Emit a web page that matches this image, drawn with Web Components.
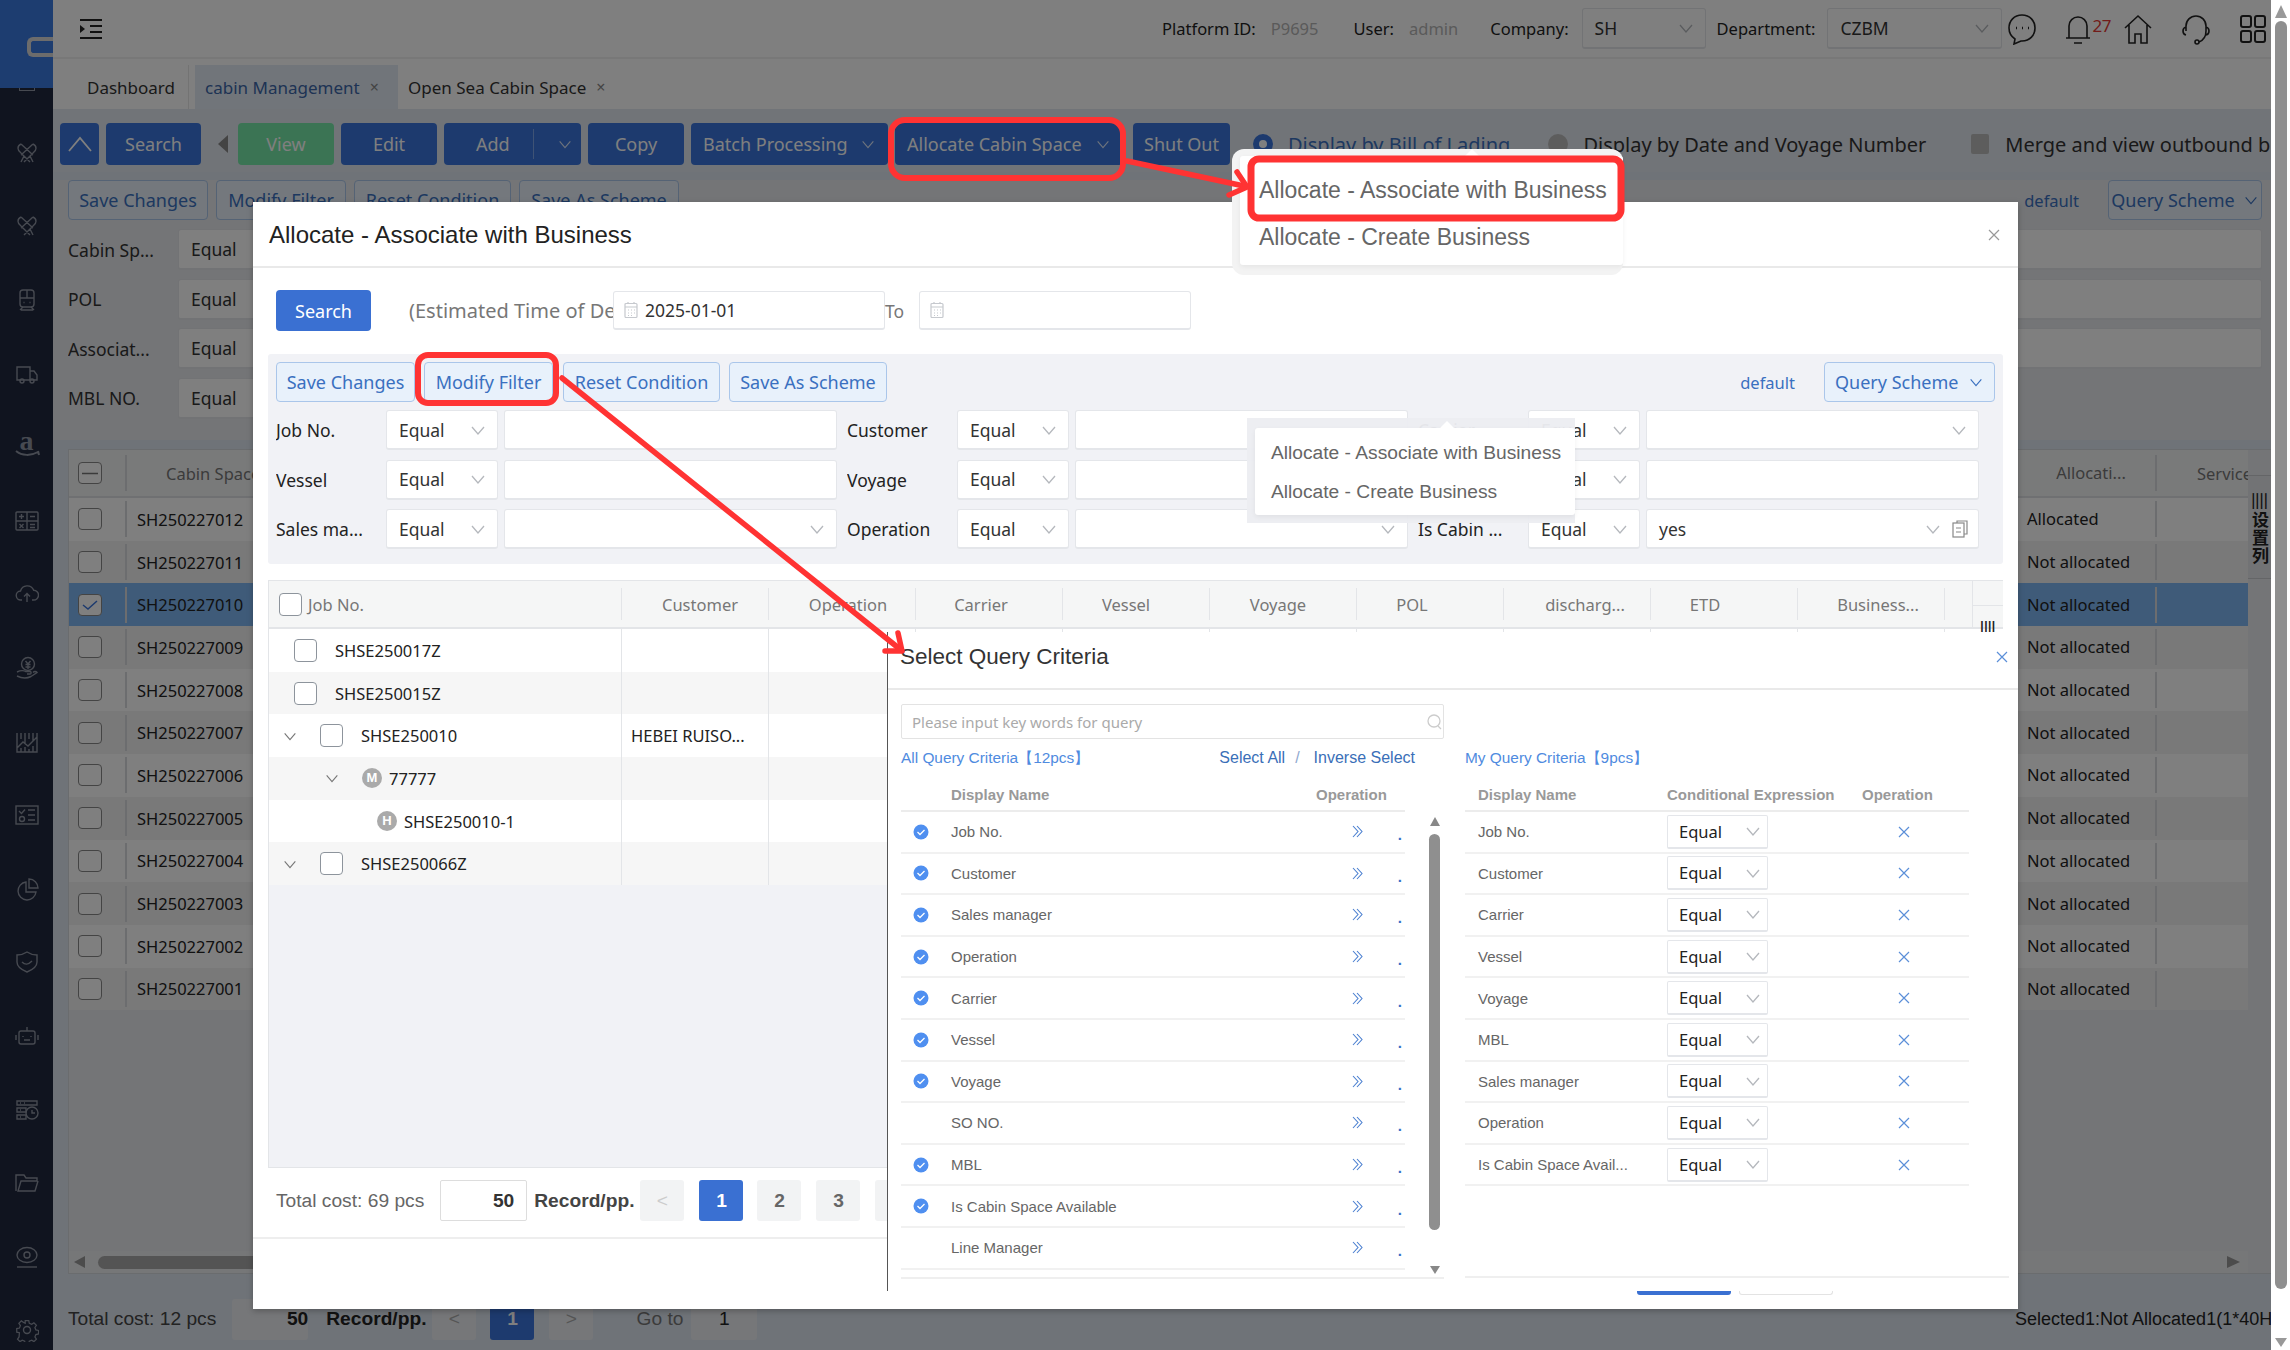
<!DOCTYPE html>
<html lang="en">
<head>
<meta charset="utf-8">
<title>Allocate</title>
<style>
html,body{margin:0;padding:0;width:2290px;height:1350px;overflow:hidden;background:#fff;font:17.5px "Noto Sans","Noto Sans CJK SC",sans-serif;color:#333}
</style>
<script>
const chev=(c='#b5b8bd',s=18)=>`<svg width="${s}" height="${s}" viewBox="0 0 18 18" fill="none" stroke="${c}" stroke-width="1.3" style="flex:none;display:block"><path d="M3 6l6 7 6-7"/></svg>`;
const cal=(c='#c6c9ce')=>`<svg width="14" height="18" viewBox="0 0 14 18" fill="none" stroke="${c}" stroke-width="1.2" style="flex:none;display:block"><rect x="1" y="2.5" width="12" height="14" rx="1"/><path d="M1 6h12M4 1v2M10 1v2M4 9h1M7 9h1M10 9h1M4 12h1M7 12h1M10 12h1M4 14.500h1M7 14.500h1"/></svg>`;
function def(name,css,render){customElements.define(name,class extends HTMLElement{connectedCallback(){if(this.shadowRoot)return;const r=this.attachShadow({mode:'open'});r.innerHTML=`<style>${css}</style>`+render(this)}})}
const A=(e,n,d='')=>e.getAttribute(n)??d;

def('x-btn',`:host{display:inline-flex;box-sizing:border-box;height:var(--h,41px);align-items:center;justify-content:center;border-radius:4px;flex:none;white-space:nowrap;font-size:18px;gap:8px;background:#3a75dc;color:#fff;padding:0 12px}
:host([kind=green]){background:#76e8a8}
:host([kind=light]){background:#e8f1fb;color:#3a70c0;border:1.5px solid #aac6ea;height:40px}
:host([split]){justify-content:space-between}
:host([blue]){background:#3a70d2}
.d{width:1px;height:30px;background:#7fa6ea;margin:0 2px}`,e=>`<slot></slot>${e.hasAttribute('add')?'<span class="d"></span>':''}${e.hasAttribute('chev')?chev(A(e,'kind')=='light'?'#3a70c0':'#dbe6fa',16):''}`);

def('x-sel',`:host{display:flex;box-sizing:border-box;height:var(--h,40px);align-items:center;justify-content:space-between;background:#fff;border:1px solid #e4e6ea;border-bottom:2px solid #e4e6ea;border-radius:3px;padding:0 10px 0 12px;color:#333;min-width:0;white-space:nowrap}
.r{display:flex;align-items:center;gap:10px}`,e=>`<span><slot></slot></span><span class="r">${e.hasAttribute('nochev')?'':chev()}${e.hasAttribute('doc')?`<svg width="16" height="18" viewBox="0 0 16 18" fill="none" stroke="#888" stroke-width="1.2"><rect x="1" y="3" width="11" height="14"/><path d="M5 3V1h10v13h-3M4 8h5M4 12h5"/></svg>`:''}</span>`);

def('x-inp',`:host{display:flex;box-sizing:border-box;height:40px;align-items:center;gap:8px;background:#fff;border:1px solid #e4e6ea;border-bottom:2px solid #e4e6ea;border-radius:3px;padding:0 10px;color:#333;white-space:nowrap;min-width:0}`,e=>`${e.hasAttribute('cal')?cal():''}<slot></slot>`);

def('x-fgroup',`:host{display:grid;grid-template-columns:110px 112px 339px;column-gap:0;align-items:center;white-space:nowrap}
x-inp,x-sel.v{margin-left:6px}
.l{overflow:hidden}`,e=>{const k=A(e,'kind','i'),v=A(e,'value');return `<span class="l">${A(e,'label')}</span><x-sel>Equal</x-sel>${k=='i'?'<x-inp></x-inp>':`<x-sel class="v" ${k=='doc'?'doc':''}>${v}</x-sel>`}`});

const sideIcons=[
'<path d="M6 3C2 5 2 9 6 12l9 9M18 3c4 2 4 6 0 9l-9 9M6 3l12 11M18 3L6 14M15 15l3 6M9 15l-3 6"/>',
'<path d="M6 3C2 5 2 9 6 12l9 9M18 3c4 2 4 6 0 9l-9 9M6 3l12 11M18 3L6 14M15 15l3 6"/>',
'<rect x="5" y="2" width="14" height="17" rx="3"/><path d="M5 10h14M12 2v8M8.500 14.500h1M14.500 14.500h1M8 19l-3 3M16 19l3 3M6 22h12"/>',
'<path d="M2 5h13v13H2zM15 9h4l3 4v5h-7"/><circle cx="7" cy="19" r="2"/><circle cx="17" cy="19" r="2"/>',
'', 
'<rect x="1" y="3" width="22" height="18" rx="1"/><path d="M12 3v18M1 12h22M4 7.500h5M6.500 5v5M15 7.500h5M4.500 15l4 4M8.500 15l-4 4M15 15.500h5M15 18.500h5"/>',
'<path d="M7 18H6a4.500 4.500 0 0 1-.5-9 7 7 0 0 1 13.200-.8A4.800 4.800 0 0 1 18.500 18H17M12 20v-8M9 14.500l3-3 3 3"/>',
'<circle cx="13" cy="8" r="6.500"/><path d="M10.500 5l2.500 3 2.500-3M10.500 8.500h5M10.500 11h5M13 8v5M2 16c4-2 6-2 9-.5h4c1.500 0 1.500 2.500 0 2.500h-3M2 20c6 3 11 2 14 .5l6-4c-1-1.500-3-1-4 0"/>',
'<path d="M2 3v19h20V3M6 3v6M10 3v10M14 3v6M18 3v8M2 18l6-6 5 4 9-9M6 22v-4M10 22v-5M14 22v-3M18 22v-6"/>',
'<rect x="1" y="3" width="22" height="18"/><path d="M4 8l2.500 2.500L10 6.500M13 7h7M13 12h7M13 17h7"/><circle cx="7" cy="16" r="2.500"/>',
'<path d="M11 5a9 9 0 1 0 10 10H11z"/><path d="M14 2a9 9 0 0 1 9 9h-9z"/>',
'<path d="M12 2c3 2 7 3 10 3v7c0 5-5 8-10 10C7 20 2 17 2 12V5c3 0 7-1 10-3z"/><path d="M7 12c3 3 6 3 10-1"/>',
'<rect x="4" y="7" width="16" height="13" rx="2"/><path d="M12 7V3M1 11v5M23 11v5M8 12v1M16 12v1M9 16h6"/>',
'<path d="M2 3h20v4H2zM2 10h9v4H2zM2 17h9v4H2zM5 5h1M5 12h1M5 19h1M9 5h1"/><circle cx="17" cy="15" r="6"/><path d="M17 12v3h3"/>',
'<path d="M1 20V4h8l2 3h11v3H6l-3 10h17l3-10"/>',
'<ellipse cx="12" cy="10" rx="10" ry="7.500"/><circle cx="12" cy="10" r="3"/><path d="M2 22h20"/>',
'<circle cx="12" cy="12" r="3.500"/><path d="M10 1.500h4l.6 3 2.700 1.100 2.500-1.700 2.800 2.800-1.700 2.500 1.100 2.700 3 .6v4l-3 .6-1.100 2.700 1.700 2.500-2.800 2.800-2.500-1.700-2.700 1.100-.6 3h-4l-.6-3-2.700-1.100-2.500 1.700-2.800-2.800 1.700-2.500L3.500 15l-3-.6v-4l3-.6 1.100-2.700-1.700-2.500 2.800-2.800 2.500 1.700L10 4.500z" transform="translate(1.300 1.300) scale(.89)"/>'
];
def('x-side',`:host{display:flex;flex-direction:column;width:53px;flex:none;background:#20283e;overflow:hidden;position:relative}
.logo{height:88px;background:#3a7be0;flex:none;display:flex;align-items:flex-end;justify-content:flex-end;padding-bottom:0;box-sizing:border-box}
.c{width:26px;height:20px;border:4px solid #d8d8d8;border-right:none;border-radius:6px 0 0 6px;box-sizing:border-box;margin-bottom:31px}
.stub{height:28px;flex:none;display:flex;justify-content:center}
.stub i{display:block;width:16px;height:3px;border:1.500px solid #8e94a2;border-top:none;box-sizing:border-box}
.it{height:73.600px;flex:none;display:flex;align-items:center;justify-content:center;color:#8e94a2}
svg{display:block;width:24px;height:24px;fill:none;stroke:currentColor;stroke-width:1.4}
.a{font:700 28px/1 "Liberation Serif",serif;position:relative;height:32px;width:26px;text-align:center;top:-4px}
.a svg{position:absolute;left:0;top:23px;width:26px;height:8px;stroke-width:2}`,()=>`<div class="logo"><div class="c"></div></div><div class="stub"><i></i></div>`+sideIcons.map((p,i)=>i==4?`<div class="it"><div class="a">a<svg viewBox="0 0 26 8"><path d="M2 1c6 5 15 5 22 1M24 1l1 4"/></svg></div></div>`:`<div class="it"><svg viewBox="0 0 24 24">${p}</svg></div>`).join(''));

def('x-top',`:host{display:flex;align-items:center;height:59px;flex:none;box-sizing:border-box;background:#fff;border-bottom:2px solid #f0f0f0;padding-left:27px;font-size:16.500px;color:#222;white-space:nowrap}
.g{color:#b4b4b4}
x-sel{--h:41px;color:#333;font-size:17.500px}
svg{display:block;fill:none;stroke:#222;stroke-width:1.6;flex:none}
.n{color:#e53935;font-size:17px;width:20px;margin-left:0;letter-spacing:-.5px;position:relative;top:-3px}`,()=>`<svg width="22" height="22" viewBox="0 0 22 22" style="stroke-width:2.2"><path d="M0 2h22M10 8h12M10 14h12M0 20h22"/><path d="M0 7l5 4-5 4z" fill="#222" stroke="none"/></svg>
<span style="margin-left:1060px">Platform ID:</span><span class="g" style="margin-left:15px">P9695</span><span style="margin-left:35px">User:</span><span class="g" style="margin-left:15px">admin</span><span style="margin-left:32px">Company:</span>
<x-sel style="width:124px;margin-left:13px">SH</x-sel><span style="margin-left:11px">Department:</span><x-sel style="width:175px;margin-left:12px">CZBM</x-sel>
<svg width="30" height="32" viewBox="0 0 30 32" style="margin-left:5px"><path d="M15 2C7 2 2 8 2 15c0 5 3 9 6 11l-1 5 7-3h1c8 0 13-6 13-13S23 2 15 2z"/><path d="M9 15h1M15 15h1M21 15h1" stroke-width="2.400"/></svg>
<svg width="28" height="32" viewBox="0 0 28 32" style="margin-left:27px"><path d="M5 25V13a9 9 0 0 1 18 0v12M2 25h24M10 30h8"/></svg><span class="n">27</span>
<svg width="30" height="32" viewBox="0 0 30 32" style="margin-left:11px"><path d="M2 15L15 3l13 12M6 12v18h6v-9h6v9h6V12"/></svg>
<svg width="30" height="32" viewBox="0 0 30 32" style="margin-left:28px"><path d="M5 18v-5a10 10 0 0 1 20 0v5c0 5-2 9-7 11M5 14c-4 1-4 7 0 8M25 14c4 1 4 7 0 8"/><circle cx="16" cy="29" r="2" /></svg>
<svg width="28" height="30" viewBox="0 0 28 30" style="margin-left:28px;stroke-width:2"><rect x="2" y="2" width="10" height="11" rx="2"/><rect x="16" y="2" width="10" height="11" rx="2"/><rect x="2" y="17" width="10" height="11" rx="2"/><rect x="16" y="17" width="10" height="11" rx="2"/></svg>`);

def('x-tabs',`:host{display:flex;align-items:flex-end;height:50px;flex:none;background:#fff;color:#333;font-size:17px;white-space:nowrap}
.t{height:44px;display:flex;align-items:center;box-sizing:border-box}
.d{padding:0 13px 0 34px;border-right:1.500px solid #e6e6e6}
.a{margin-left:6px;width:203px;background:#e3ebf5;color:#3c66a8;padding-left:10px;justify-content:space-between;padding-right:19px}
.o{padding-left:10px}
.x{font-size:16px;color:#888}
.o .x{margin-left:10px}`,()=>`<div class="t d">Dashboard</div><div class="t a"><span>cabin Management</span><span class="x">×</span></div><div class="t o"><span>Open Sea Cabin Space</span><span class="x">×</span></div>`);

def('x-bgfilter',`:host{display:grid;grid-template-columns:110px 112px 6px 1fr 6px 356px;row-gap:8.500px;align-items:center;white-space:nowrap}
x-sel,x-inp{--h:41px;height:41px}
.l{overflow:hidden}`,()=>{const r=(l,c='',last=true)=>`<span class="l">${l}</span><x-sel>Equal</x-sel><i></i><x-inp></x-inp><i></i>${last?`<x-inp ${c}></x-inp>`:'<i></i>'}`;return r('Cabin Sp...')+r('POL')+r('Associat...','cal')+r('MBL NO.','',false)});

def('x-bgtable',`:host{display:flex;flex-direction:column;flex:1;min-height:0;background:#e9ebef;border:1.500px solid #d5d8dd;border-right:none;box-sizing:border-box;font-size:16.500px;color:#222;overflow:hidden;position:relative}
.row{display:grid;grid-template-columns:58px 180px 1720px 130px 91px 23px;height:42.700px;align-items:center;flex:none;background:#fff;white-space:nowrap}
.row.alt{background:#f3f3f3}
.row.sel{background:#7eb6f2}
.hd{height:46px;background:#f3f4f4;color:#777;border-bottom:2px solid #dfe1e4;font-size:16.500px}
.cb{width:24px;height:22px;box-sizing:border-box;border:1.500px solid #888;border-radius:4px;background:#fff;margin-left:9px;display:flex;align-items:center;justify-content:center}
.c0{border-right:2px solid #d8dade;height:36px;display:flex;align-items:center}
.c1{padding-left:10px}
.hd .c1{padding-left:39px}
.al{border-right:2px solid #d8dade;height:36px;line-height:36px}
.hd .al{text-align:center}
.sv{overflow:hidden;padding-left:40px}
.row>:last-child{background:#e9ebef;align-self:stretch}
.fill{flex:1;background:#e9ebef}
.set{position:absolute;right:0;top:25px;width:23px;font:600 16px/1 "Noto Sans CJK SC",sans-serif;color:#222;background:#e4e6ea;border-top:1.500px solid #c8cace;border-bottom:1.500px solid #c8cace;padding:16px 0 0;text-align:center;height:104px;box-sizing:border-box;overflow:hidden}
.sb{height:22px;flex:none;background:#eceef0;display:flex;align-items:center;padding:0 8px 0 5px;margin-right:23px}
.tri{width:0;height:0;border-top:6px solid transparent;border-bottom:6px solid transparent}
.th{height:13px;border-radius:7px;background:#a9a9a9;width:1500px;margin-left:13px}`,()=>{
const ids=[12,11,10,9,8,7,6,5,4,3,2,1];
return `<div class="row hd"><div class="c0"><span class="cb"><svg width="16" height="3"><path d="M0 1.500h16" stroke="#777" stroke-width="1.500"/></svg></span></div><div class="c1">Cabin Space</div><div></div><div class="al">Allocati...</div><div class="sv">Service</div><div></div></div>`+
ids.map((n,i)=>`<div class="row ${i==2?'sel':i%2?'alt':''}"><div class="c0"><span class="cb">${i==2?'<svg width="16" height="10" fill="none" stroke="#3a75dc" stroke-width="1.500"><path d="M1 5l5 4 9-8"/></svg>':''}</span></div><div class="c1">SH2502270${String(n).padStart(2,'0')}</div><div></div><div class="al">${i?'Not allocated':'Allocated'}</div><div class="sv"></div><div></div></div>`).join('')+
`<div class="fill"></div><div class="sb"><span class="tri" style="border-right:11px solid #999"></span><span class="th"></span><span class="tri" style="border-left:13px solid #999;margin-left:auto"></span></div>
<div class="set"><div style="font-size:14px;line-height:14px">||||</div><div style="font-size:17px;line-height:18px;width:17px;margin:4px auto 0 4px">设置列</div></div>`});

def('x-bgpager',`:host{display:flex;align-items:center;height:76px;padding:14px 0 0 15px;box-sizing:border-box;flex:none;font:19.200px "Liberation Sans",sans-serif;color:#444;white-space:nowrap;overflow:hidden}
.b{display:inline-flex;align-items:center;justify-content:center;height:41px;background:#eceff3;border-radius:3px;width:44px;color:#aaa;flex:none}
.p{background:#3a75dc;color:#fff;font-weight:700}`,()=>`<span>Total cost: 12 pcs</span><span class="b" style="width:76px;margin-left:16px;justify-content:flex-end;padding-right:0;color:#222;font-weight:700">50</span><b style="margin-left:18px;color:#222">Record/pp.</b><span class="b" style="margin-left:6px">&lt;</span><span class="b p" style="margin-left:14px">1</span><span class="b" style="margin-left:15px">&gt;</span><span style="margin-left:43px;color:#777">Go to</span><span class="b" style="width:66px;margin-left:8px;color:#222">1</span><span style="margin-left:auto;width:256px;overflow:hidden;color:#222;font-size:18px">Selected1:Not Allocated1(1*40HC)</span>`);

def('x-page',`:host{display:flex;flex-direction:column;flex:1;min-width:0;background:#dfe6f0}
.tb{height:63px;flex:none;box-sizing:border-box;background:#e3e8f0;padding:14px 0 0 7px;display:flex;gap:7px;align-items:flex-start;color:#333;white-space:nowrap;overflow:hidden}
x-btn{--h:42px;font-size:18px}
.tri{width:0;height:0;border-top:9px solid transparent;border-bottom:9px solid transparent;border-right:10px solid #888;margin:12px 3px 0 10px}
.opt{display:flex;align-items:center;height:42px;font-size:20px}
.r{width:20px;height:20px;border-radius:50%;box-sizing:border-box;flex:none}
.fp{margin:8px 0 0;padding:0 9px 0 15px;height:260px;box-sizing:border-box;background:#e8eaee;display:flex;flex-direction:column;gap:9px}
.br{display:flex;gap:8px;align-items:center;color:#3a70c0}
.tw{flex:1;min-height:0;display:flex;flex-direction:column;padding:9px 0 0 15px}`,()=>`<div class="tb">
<x-btn style="width:39px;padding:0"><svg width="26" height="18" viewBox="0 0 26 18" fill="none" stroke="#fff" stroke-width="1.800"><path d="M2 16L13 3l11 13"/></svg></x-btn>
<x-btn style="width:95px">Search</x-btn><span class="tri"></span><x-btn kind="green" style="width:96px;color:#fff">View</x-btn><x-btn style="width:96px">Edit</x-btn><x-btn add chev style="width:137px;padding:0 8px 0 32px;justify-content:space-between">Add</x-btn><x-btn style="width:96px">Copy</x-btn><x-btn chev split style="width:197px">Batch Processing</x-btn><x-btn chev split style="width:228px">Allocate Cabin Space</x-btn><x-btn style="width:97px;margin-left:3px">Shut Out</x-btn>
<div class="opt" style="margin-left:16px;color:#3a70c0"><span class="r" style="border:6px solid #3a75dc;background:#fff"></span><span style="margin-left:15px">Display by Bill of Lading</span></div>
<div class="opt" style="margin-left:31px"><span class="r" style="background:#bbb"></span><span style="margin-left:15px">Display by Date and Voyage Number</span></div>
<div class="opt" style="margin-left:38px"><span style="width:18px;height:20px;background:#bbb;border-radius:2px"></span><span style="margin-left:16px">Merge and view outbound b</span></div>
</div>
<div class="fp"><div class="br"><x-btn kind="light" style="width:140px">Save Changes</x-btn><x-btn kind="light" style="width:130px">Modify Filter</x-btn><x-btn kind="light" style="width:157px">Reset Condition</x-btn><x-btn kind="light" style="width:160px">Save As Scheme</x-btn><span style="margin-left:auto;font-size:16.500px">default</span><x-btn kind="light" chev style="width:154px;margin-left:21px;padding:0 10px">Query Scheme</x-btn></div><x-bgfilter></x-bgfilter></div>
<div class="tw"><x-bgtable></x-bgtable></div><x-bgpager></x-bgpager>`);

def('x-vscroll',`:host{display:flex;flex-direction:column;align-items:center;width:19px;flex:none;background:#fff;height:100%;box-sizing:border-box;padding:5px 0 3px}
.tu{width:0;height:0;border:6.500px solid transparent;border-top:none;border-bottom:13px solid #999}
.td{width:0;height:0;border:6.500px solid transparent;border-bottom:none;border-top:9px solid #999;margin-top:auto}
.t{width:12px;height:1268px;margin-top:3px;background:#8f8f8f;border-radius:6px}`,()=>`<span class="tu"></span><span class="t"></span><span class="td"></span>`);

const ck=`<svg width="16" height="16" viewBox="0 0 16 16" style="display:block;flex:none"><circle cx="8" cy="8" r="7.500" fill="#4f8ff0"/><path d="M4.500 8l2.500 2.500 4.500-4.500" fill="none" stroke="#fff" stroke-width="1.300"/></svg>`;
const dbl=`<svg width="11" height="13" viewBox="0 0 11 13" fill="none" stroke="#4a7fd0" stroke-width="1.100" style="display:block"><path d="M1 1l5 5.500-5 5.500M5 1l5 5.500-5 5.500"/></svg>`;
def('x-qmodal',`:host{display:flex;flex-direction:column;background:#fff;border-left:1.500px solid #555;box-sizing:border-box;font:15px "Liberation Sans",sans-serif;color:#666;position:relative}
.h{height:58px;flex:none;box-sizing:border-box;border-bottom:2px solid #e9e9e9;padding:0 0 7px 12px;display:flex;align-items:center;justify-content:space-between;font-size:22.500px;color:#333}
.h svg{margin-right:8px}
.b{flex:1;min-height:0;display:grid;grid-template-columns:543px 544px;column-gap:21px;padding:14px 0 0 13px;overflow:hidden}
.col{display:flex;flex-direction:column;min-width:0;min-height:0}
.s{height:35px;flex:none;box-sizing:border-box;border:1.500px solid #e3e3e3;border-radius:2px;display:flex;align-items:center;justify-content:space-between;padding-left:10px;color:#aaa;font:15px "Noto Sans",sans-serif}
.ti{height:38px;flex:none;display:flex;align-items:center;color:#4f8be0;white-space:nowrap;font-size:15.400px}
.lk{color:#3a6fb8;font:16px "Liberation Sans",sans-serif}
.ti .ml{margin-left:auto}
.hr{height:35px;flex:none;display:grid;align-items:center;border-bottom:2px solid #ececec;font-weight:700;color:#999;box-sizing:border-box;padding-top:2px}
.body{position:relative;flex:1;min-height:0;display:flex;gap:24px}
.rows{width:504px;flex:none}
.lh{width:504px;grid-template-columns:50px 365px 1fr}
.lr{height:41.600px;box-sizing:border-box;border-bottom:2px solid #f1f1f1;display:grid;grid-template-columns:50px 381px 50px 1fr;align-items:center}
.lr .c{padding-left:12px}
.lr .a{display:flex;justify-content:center}
.lr .dot{color:#3a6fc8;font-weight:700;position:relative;top:3px;text-align:right;padding-right:3px}
.rs{width:11px;flex:none;display:flex;flex-direction:column;align-items:center;height:457px;margin-top:5px}
.tu{width:0;height:0;border:5.500px solid transparent;border-top:none;border-bottom:9px solid #888}
.td{width:0;height:0;border:5.500px solid transparent;border-bottom:none;border-top:8px solid #888;margin-top:auto}
.tt{width:11px;height:396px;margin-top:8px;background:#8f8f8f;border-radius:6px}
.rh{width:504px;grid-template-columns:202px 195px 1fr}
.rh span:first-child{padding-left:13px}
.rr{width:504px;height:41.600px;box-sizing:border-box;border-bottom:2px solid #f1f1f1;display:grid;grid-template-columns:202px 195px 1fr;align-items:center}
.rr>span:first-child{padding-left:13px;white-space:nowrap}
.rr x-sel{--h:34px;height:34px;width:101px;padding:0 5px 0 11px;font:16.500px "Noto Sans",sans-serif;color:#222;border-radius:2px}
.rr .x{padding-left:35px;display:block;line-height:0}
.lft{position:absolute;left:13px;width:543px;bottom:12px;height:2px;background:#efefef}
.rgt{position:absolute;left:577px;width:544px;bottom:13px;height:2px;background:#efefef}
.f{position:absolute;bottom:-4px;left:749px;display:flex;gap:8px}
.f i{display:block;height:4px;width:94px;background:#3a70d2;border-radius:0 0 3px 3px}
.f i+i{background:#fff;border:1px solid #e3e3e3;border-top:none;box-sizing:border-box}`,()=>{
const L=[['Job No.',1],['Customer',1],['Sales manager',1],['Operation',1],['Carrier',1],['Vessel',1],['Voyage',1],['SO NO.',0],['MBL',1],['Is Cabin Space Available',1],['Line Manager',0]];
const R=['Job No.','Customer','Carrier','Vessel','Voyage','MBL','Sales manager','Operation','Is Cabin Space Avail...'];
return `<div class="h"><span>Select Query Criteria</span><svg width="16" height="16" viewBox="0 0 16 16" fill="none" stroke="#5b8fd8" stroke-width="1.200"><path d="M3 3l10 10M13 3L3 13"/></svg></div>
<div class="b"><div class="col"><div class="s">Please input key words for query<svg width="18" height="18" viewBox="0 0 18 18" fill="none" stroke="#ccc" stroke-width="1.300"><circle cx="9" cy="8" r="6"/><path d="M13 13l3 3"/></svg></div>
<div class="ti"><span>All Query Criteria【12pcs】</span><span class="lk ml" style="margin-right:10px">Select All</span><span class="lk" style="color:#8fa9cf">/</span><span class="lk" style="margin:0 29px 0 14px">Inverse Select</span></div>
<div class="hr lh"><span></span><span>Display Name</span><span>Operation</span></div>
<div class="body"><div class="rows">${L.map(([t,c])=>`<div class="lr"><span class="c">${c?ck:''}</span><span>${t}</span><span class="a">${dbl}</span><span class="dot">.</span></div>`).join('')}</div><div class="rs"><span class="tu"></span><span class="tt"></span><span class="td"></span></div></div></div>
<div class="col"><div style="height:35px;flex:none"></div><div class="ti"><span>My Query Criteria【9pcs】</span></div>
<div class="hr rh"><span>Display Name</span><span>Conditional Expression</span><span>Operation</span></div>
<div>${R.map(t=>`<div class="rr"><span>${t}</span><x-sel>Equal</x-sel><span class="x"><svg width="14" height="14" viewBox="0 0 14 14" fill="none" stroke="#5b8fd8" stroke-width="1.200"><path d="M2 2l10 10M12 2L2 12"/></svg></span></div>`).join('')}</div></div></div>
<div class="lft"></div><div class="rgt"></div><div class="f"><i></i><i></i></div>`});

def('x-popmenu',`:host{display:block;position:absolute;box-sizing:border-box;color:#666;white-space:nowrap;font-family:"Liberation Sans",sans-serif}
.o{position:absolute;inset:0;border-radius:var(--r,12px);background:var(--o,#f1f1f1)}
.i{position:absolute;left:var(--l,8px);right:0;top:var(--t,8px);bottom:var(--b,10px);background:#fff;box-shadow:0 2px 5px rgba(0,0,0,.06);border-radius:3px;box-sizing:border-box}
.n{position:absolute;top:calc(var(--t,8px) - 7px);left:var(--nx,200px);width:0;height:0;border:7px solid transparent;border-top:none;border-bottom-color:#fff}
.m{position:absolute;left:var(--tx,24px);white-space:nowrap}`,e=>`<div class="o"></div><div class="i"></div><div class="n"></div><div class="m" style="top:var(--y1)">Allocate - Associate with Business</div><div class="m" style="top:var(--y2)">Allocate - Create Business</div>`);

def('x-allocate',`:host{display:flex;flex-direction:column;position:absolute;left:253px;top:202px;width:1765px;height:1107px;background:#fff;box-shadow:0 2px 6px rgba(0,0,0,.25);font-family:"Noto Sans",sans-serif}
.h{height:66px;flex:none;box-sizing:border-box;border-bottom:2px solid #e9e9e9;display:flex;align-items:center;justify-content:space-between;padding:2px 16px 0 16px;font:24px "Liberation Sans",sans-serif;color:#222}
.q{display:flex;align-items:center;margin:22px 0 0 23px;height:41px;flex:none;color:#777;white-space:nowrap}
.q x-inp{height:39px;width:272px;flex:none;padding-left:10px;gap:7px}
.est{margin-left:38px;width:204px;overflow:hidden;font-size:20px}
.p{flex:none;margin:23px 15px 0;height:210px;box-sizing:border-box;background:#f1f2f6;padding:8px 8px 0;border-radius:3px;display:flex;flex-direction:column;gap:8px}
.br{display:flex;gap:9px;align-items:center;color:#3a70c0}
.fg{display:grid;grid-template-columns:repeat(3,561px);column-gap:10px;row-gap:9.500px;color:#222}
.t{flex:none;margin:16px 15px 0;height:588px;box-sizing:border-box;border:1.500px solid #e3e5e8;border-right:none;background:#f1f2f6;display:flex;flex-direction:column;font-size:16.500px;color:#222;overflow:hidden;position:relative}
.tr{display:grid;grid-template-columns:353px 147px 147px 147px 147px 147px 147px 147px 147px 147px 27px 1fr;flex:none;height:42.700px;align-items:center;background:#fff;white-space:nowrap}
.tr.alt{background:#f6f6f6}
.tr>div{height:100%;display:flex;align-items:center;border-right:1.500px solid #e3e5e8;box-sizing:border-box;justify-content:center;overflow:hidden}
.tr>div:first-child{justify-content:flex-start}
.tr>div.nb{border:none}
.th{height:46px;background:#f5f6f6;color:#777;border-bottom:2px solid #e3e5e8;position:relative;z-index:1}
.th>div{height:32px!important}
.th>div.bar{height:46px!important;border-left:1.500px solid #e3e5e8;display:block;overflow:visible;font:12px/1 "Liberation Sans",sans-serif;color:#222;text-align:center;padding-top:39px;letter-spacing:.5px;font-weight:700;background:linear-gradient(#f5f6f6 24px,#e3e5e8 24px,#e3e5e8 25px,#f5f6f6 25px)}
.cb{width:23px;height:23px;box-sizing:border-box;border:1.500px solid #8d949c;border-radius:4px;background:#fff;flex:none}
.bd{width:20px;height:20px;border-radius:50%;background:#aaa;color:#fff;font:700 13px/20px "Liberation Sans",sans-serif;text-align:center;flex:none}
.tx{overflow:hidden}
.pg{display:flex;align-items:center;height:71px;box-sizing:border-box;border-bottom:2px solid #eee;flex:none;padding:0 0 4px 23px;margin:0;font:19.200px "Liberation Sans",sans-serif;color:#666;white-space:nowrap}
.n{display:inline-flex;align-items:center;justify-content:center;width:44px;height:41px;border-radius:3px;background:#f2f3f4;flex:none;font-weight:700;color:#666}
.n.a{background:#3a70d2;color:#fff}
x-qmodal{position:absolute;left:634px;top:430px;width:1131px;height:659px;z-index:2}
x-popmenu{left:994px;top:216px;width:328px;height:105px;font-size:19.200px;z-index:1;--o:rgba(236,237,241,.96);--r:0;--l:8px;--t:10px;--b:8px;--nx:193px;--tx:24px;--y1:24px;--y2:63px}`,()=>{
const cols=['Customer','Operation','Carrier','Vessel','Voyage','POL','discharg...','ETD','Business...'];
const off=[10,12,0,0,0,0,16,0,14],offR=[0,0,16,20,10,36,0,38,0];
const row=(c,alt,first,cust='')=>`<div class="tr ${alt?'alt':''}"><div>${first}</div><div>${cust}</div>${cols.slice(1).map(()=>'<div></div>').join('')}<div class="nb"></div><div class="nb"></div></div>`;
const cb=l=>`<span class="cb" style="margin-left:${l}px"></span>`;
const ch=l=>`<span style="margin-left:${l}px;flex:none">${chev('#777',16)}</span>`;
return `<div class="h"><span>Allocate - Associate with Business</span><svg width="16" height="16" viewBox="0 0 16 16" fill="none" stroke="#999" stroke-width="1.200"><path d="M3 3l10 10M13 3L3 13"/></svg></div>
<div class="q"><x-btn blue style="width:95px;--h:41px">Search</x-btn><span class="est">(Estimated Time of Departure)</span><x-inp cal><span style="color:#333">2025-01-01</span></x-inp><span style="width:34px">To</span><x-inp cal></x-inp></div>
<div class="p"><div class="br"><x-btn kind="light" style="width:139px">Save Changes</x-btn><x-btn kind="light" style="width:129px">Modify Filter</x-btn><x-btn kind="light" style="width:157px;margin-left:1px">Reset Condition</x-btn><x-btn kind="light" style="width:158px">Save As Scheme</x-btn><span style="margin-left:auto;font-size:16.500px">default</span><x-btn kind="light" chev split style="width:171px;margin-left:20px;padding:0 10px;margin-right:0">Query Scheme</x-btn></div>
<div class="fg"><x-fgroup label="Job No."></x-fgroup><x-fgroup label="Customer"></x-fgroup><x-fgroup label="Carrier" kind="sel"></x-fgroup><x-fgroup label="Vessel"></x-fgroup><x-fgroup label="Voyage"></x-fgroup><x-fgroup label="MBL"></x-fgroup><x-fgroup label="Sales ma..." kind="sel"></x-fgroup><x-fgroup label="Operation" kind="sel"></x-fgroup><x-fgroup label="Is Cabin ..." kind="doc" value="yes"></x-fgroup></div></div>
<div class="t"><div class="tr th"><div><span class="cb" style="margin-left:10px"></span><span style="margin-left:6px">Job No.</span></div>${cols.map((c,i)=>`<div style="padding:0 ${offR[i]}px 0 ${off[i]}px">${c}</div>`).join('')}<div class="nb"></div><div class="nb bar">||||</div></div>
${row(0,0,cb(25)+'<span class="tx" style="margin-left:18px">SHSE250017Z</span>')}
${row(0,1,cb(25)+'<span class="tx" style="margin-left:18px">SHSE250015Z</span>')}
${row(0,0,ch(13)+cb(22)+'<span class="tx" style="margin-left:18px">SHSE250010</span>','<span style="margin-right:auto;margin-left:9px">HEBEI RUISO...</span>')}
${row(0,1,ch(55)+'<span class="bd" style="margin-left:22px">M</span><span class="tx" style="margin-left:7px">77777</span>')}
${row(0,0,'<span class="bd" style="margin-left:108px">H</span><span class="tx" style="margin-left:7px">SHSE250010-1</span>')}
${row(0,1,ch(13)+cb(22)+'<span class="tx" style="margin-left:18px">SHSE250066Z</span>')}
</div>
<div class="pg"><span>Total cost: 69 pcs</span><span style="box-sizing:border-box;width:87px;height:41px;border:1.500px solid #ddd;border-radius:2px;margin-left:16px;display:flex;align-items:center;justify-content:flex-end;padding-right:12px;font-weight:700;color:#333">50</span><b style="margin-left:7px;color:#444">Record/pp.</b><span class="n" style="margin-left:6px;color:#ccc;font-weight:400">&lt;</span><span class="n a" style="margin-left:15px">1</span><span class="n" style="margin-left:14px">2</span><span class="n" style="margin-left:15px">3</span><span class="n" style="margin-left:15px"></span></div>
<x-popmenu></x-popmenu><x-qmodal></x-qmodal>`});

def('x-marks',`:host{display:block;position:absolute;inset:0;pointer-events:none;z-index:9}
svg{position:absolute;left:0;top:0;display:block}`,()=>`<svg width="2290" height="1350" fill="none" stroke="#ff3333" stroke-linejoin="round" stroke-linecap="round">
<rect x="891" y="120" width="232" height="58" rx="14" stroke-width="6"/>
<rect x="1251" y="159" width="370" height="59" rx="8" stroke-width="7"/>
<rect x="418" y="355" width="138" height="48" rx="10" stroke-width="6"/>
<path d="M1127 161L1244 186" stroke-width="5.500"/><path d="M1237 172L1247 187 1229 195" stroke-width="5.500"/>
<path d="M562 378L901 650" stroke-width="5.500"/><path d="M898 633L902 651 885 651" stroke-width="5.500"/></svg>`);

def('x-app',`:host{display:flex;position:relative;width:2290px;height:1350px;overflow:hidden}
.dim{position:absolute;left:0;top:0;width:2271px;height:1350px;background:rgba(0,0,0,.5)}
.m{display:flex;flex-direction:column;flex:1;min-width:0}
x-popmenu{left:1232px;top:149px;width:391px;height:126px;font-size:23px;z-index:5;--o:#f3f3f3;--l:8px;--t:7px;--b:10px;--nx:233px;--tx:27px;--y1:28px;--y2:75px}`,()=>`<x-side></x-side><div class="m"><x-top></x-top><x-tabs></x-tabs><x-page style="flex:1;min-height:0"></x-page></div><x-vscroll></x-vscroll><div class="dim"></div><x-allocate></x-allocate><x-popmenu></x-popmenu><x-marks></x-marks>`);
</script>
</head>
<body><x-app></x-app></body>
</html>
